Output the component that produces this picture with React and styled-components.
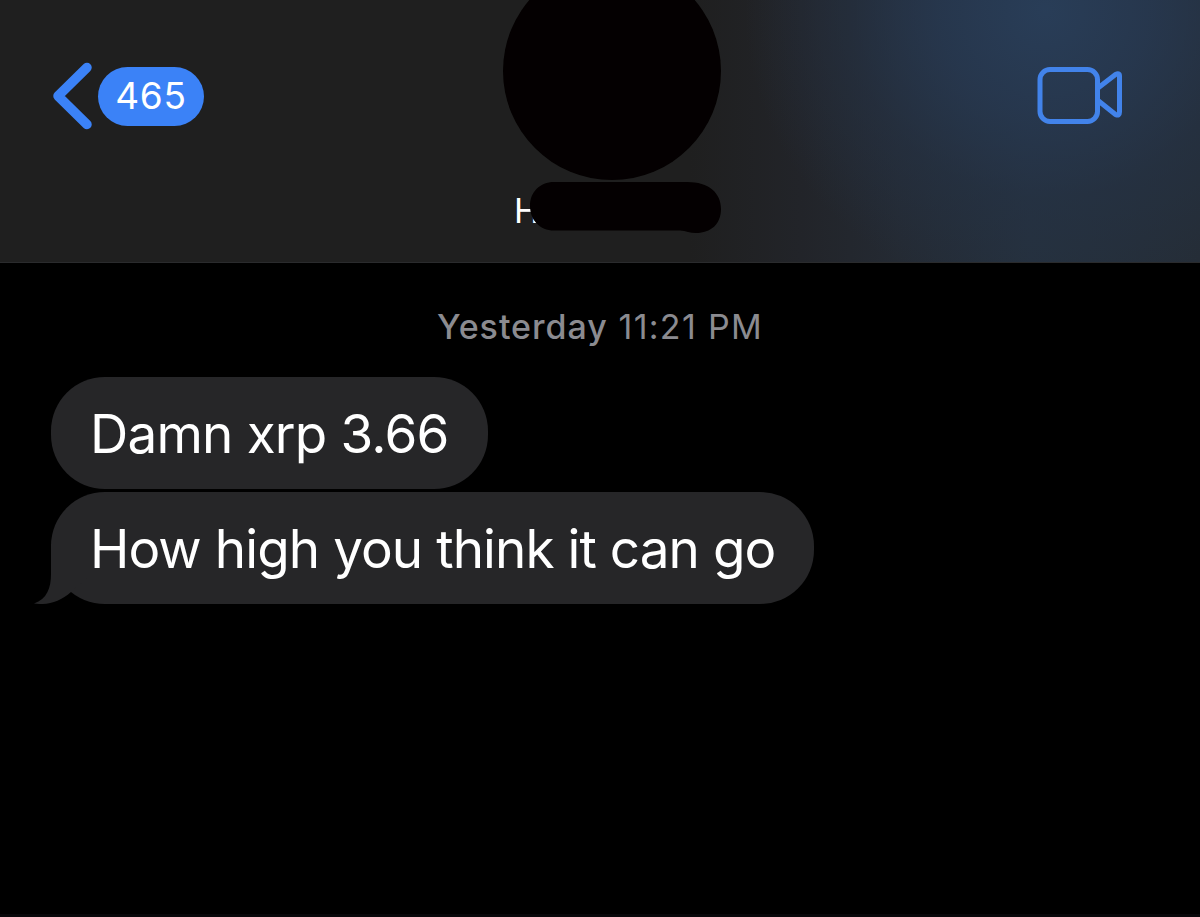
import React from 'react'
import styled, { createGlobalStyle } from 'styled-components'

const GlobalStyle = createGlobalStyle`
  * {
    box-sizing: border-box;
  }

  body {
    margin: 0;
    background: #000;
    font-family: Inter, 'Liberation Sans', sans-serif;
  }
`

const Screen = styled.div`
  width: 1200px;
  height: 917px;
  overflow: hidden;
  border-bottom: 3px solid #08070a;
  background: #000;
`

const Header = styled.header`
  height: 263px;
  overflow: hidden;
  display: grid;
  grid-template-columns: 503px 218px 1fr;
  border-bottom: 1px solid #2a2b2d;
  background:
    radial-gradient(
      ellipse 300px 290px at 1045px 10px,
      rgba(41, 62, 89, 0.95) 0%,
      rgba(39, 57, 82, 0.8) 35%,
      rgba(37, 51, 71, 0.5) 65%,
      rgba(36, 45, 56, 0) 100%
    ),
    linear-gradient(
      to right,
      #1f1f1f 690px,
      #222429 800px,
      #242a33 900px,
      #25303d 1030px,
      #252d37 1200px
    );
`

const BackButton = styled.a`
  display: flex;
  align-self: start;
  align-items: center;
  gap: 6px;
  padding: 62px 0 0 52px;
  text-decoration: none;
`

const Badge = styled.span`
  width: 106px;
  height: 59px;
  border-radius: 30px;
  background: #3b82f7;
  color: #fff;
  font-size: 37px;
  line-height: 58px;
  letter-spacing: 0.8px;
  text-align: center;
`

const Contact = styled.div`
  display: flex;
  flex-direction: column;
`

const Avatar = styled.div`
  flex: none;
  width: 218px;
  height: 218px;
  margin-top: -38px;
  border-radius: 50%;
  background: #040001;
`

const Name = styled.div`
  position: relative;
  height: 52px;
  margin-top: 1px;
  padding-left: 11px;
  color: #fff;
  font-size: 34px;
  line-height: 60px;
`

const Marker = styled.svg`
  position: absolute;
  top: 0;
  left: 26px;
`

const Actions = styled.div`
  display: flex;
  justify-content: flex-end;
  padding: 66px 76px 0 0;
`

const Thread = styled.main`
  display: flex;
  flex-direction: column;
  align-items: flex-start;
  padding: 42px 51px 0;
`

const Timestamp = styled.time`
  align-self: center;
  height: 72px;
  color: #8b8b90;
  font-size: 34px;
  line-height: 44px;
  letter-spacing: 1.3px;
  white-space: nowrap;

  span {
    font-weight: 500;
    letter-spacing: 0.95px;
  }
`

const Bubble = styled.div`
  position: relative;
  width: ${props => props.$width}px;
  height: 112px;
  margin-bottom: 3px;
  padding-left: 39px;
  border-radius: 54px;
  background: #262628;
  color: #fff;
  font-size: 53px;
  line-height: 115px;
  letter-spacing: ${props => props.$tracking}px;
  white-space: nowrap;
`

const Tail = styled.svg`
  position: absolute;
  bottom: 0;
  left: -18px;
`

const messages = [
  { text: 'Damn xrp 3.66', width: 437, tracking: -0.8 },
  { text: 'How high you think it can go', width: 763, tracking: -0.92, last: true },
]

const App = () => {
  return (
    <Screen>
      <GlobalStyle />
      <Header>
        <BackButton href="#">
          <svg width="40" height="68" viewBox="0 0 40 68" fill="none">
            <path d="M35 5.5L6 34L35 62.5" stroke="#3b82f7" strokeWidth="9.5" strokeLinecap="round" strokeLinejoin="round" />
          </svg>
          <Badge>465</Badge>
        </BackButton>
        <Contact>
          <Avatar />
          <Name>
            H
            <Marker width="192" height="53" viewBox="0 0 192 53">
              <path d="M25 1H158C180 1 192 12 192 28C192 43 182 52 167 52C161 52 157 50 151 49.5H25C11 49.5 1 39 1 25C1 11 11 1 25 1Z" fill="#040001" />
            </Marker>
          </Name>
        </Contact>
        <Actions>
          <svg width="88" height="59" viewBox="0 0 88 59" fill="none" stroke="#4283ea" strokeWidth="5" strokeLinejoin="round">
            <rect x="4" y="3.5" width="57.5" height="52" rx="10" />
            <path d="M62 22L79.5 8.5Q83.5 6.5 83.5 10V46Q83.5 50.5 79.5 48.5L62 34.5" />
          </svg>
        </Actions>
      </Header>
      <Thread>
        <Timestamp><span>Yesterday</span> 11:21 PM</Timestamp>
        {messages.map(({ text, width, tracking, last }) => (
          <Bubble key={text} $width={width} $tracking={tracking}>
            {last && (
              <Tail width="70" height="60" viewBox="0 0 70 60">
                <path d="M18 0V30C18 44 14 55 1 59.5C14 61.5 27 58 38 48L60 30V0Z" fill="#262628" />
              </Tail>
            )}
            {text}
          </Bubble>
        ))}
      </Thread>
    </Screen>
  )
}

export default App
